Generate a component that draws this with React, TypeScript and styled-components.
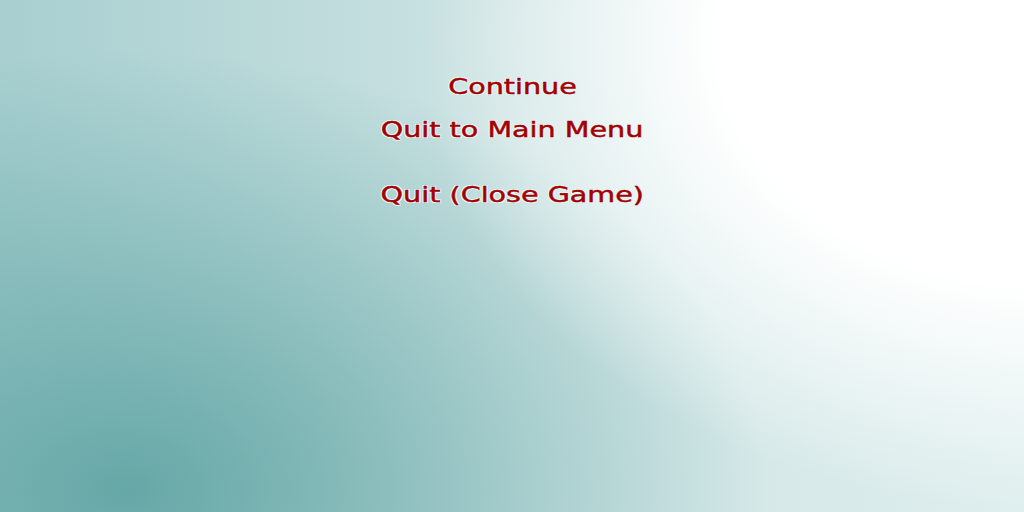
import React from "react";
import styled, { createGlobalStyle } from "styled-components";

const Global = createGlobalStyle`
  html, body { margin: 0; padding: 0; width: 100%; height: 100%; overflow: hidden; }
  #root { width: 100%; height: 100%; }
`;

const Screen = styled.div`
  width: 1024px;
  height: 512px;
  display: flex;
  flex-direction: column;
  align-items: center;
  background:
    radial-gradient(ellipse 620px 470px at 1040px 40px, #ffffff 0%, #ffffff 52%, rgba(255,255,255,0) 100%),
    radial-gradient(ellipse 640px 440px at 125px 490px, #66a8a7 0%, rgba(102,168,167,0) 100%),
    linear-gradient(90deg, #a8cfd0 0%, #cde3e3 50%, #dfeeee 100%);
`;

const Menu = styled.nav`
  display: flex;
  flex-direction: column;
  align-items: center;
  padding-top: 65px;
`;

const Item = styled.div<{ $gap?: number }>`
  margin-top: ${(p) => p.$gap ?? 0}px;
  height: 43px;
  display: flex;
  align-items: center;
  font-family: "DejaVu Sans", sans-serif;
  font-weight: normal;
  font-size: 22px;
  color: #a40000;
  -webkit-text-stroke: 0.45px #a40000;
  transform: scaleX(1.3);
  white-space: nowrap;
  text-shadow:
    1px 0 0 #e4f6f6, -1px 0 0 #e4f6f6, 0 1px 0 #e4f6f6, 0 -1px 0 #e4f6f6,
    1px 1px 0 #e4f6f6, -1px -1px 0 #e4f6f6, 1px -1px 0 #e4f6f6, -1px 1px 0 #e4f6f6;
  cursor: pointer;
`;

export default function App() {
  return (
    <>
      <Global />
      <Screen>
        <Menu>
          <Item>Continue</Item>
          <Item>Quit to Main Menu</Item>
          <Item $gap={22}>Quit (Close Game)</Item>
        </Menu>
      </Screen>
    </>
  );
}
